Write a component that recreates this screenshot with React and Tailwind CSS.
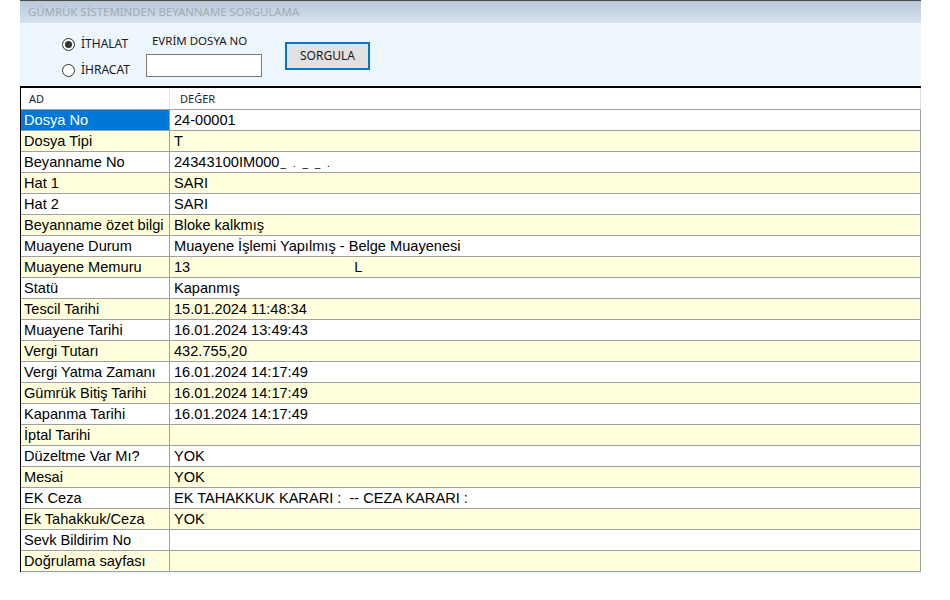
import React from 'react';

const rows = [
  ['Dosya No', '24-00001'],
  ['Dosya Tipi', 'T'],
  ['Beyanname No', 'BEYAN'],
  ['Hat 1', 'SARI'],
  ['Hat 2', 'SARI'],
  ['Beyanname özet bilgi', 'Bloke kalkmış'],
  ['Muayene Durum', 'Muayene İşlemi Yapılmış - Belge Muayenesi'],
  ['Muayene Memuru', 'MEMUR'],
  ['Statü', 'Kapanmış'],
  ['Tescil Tarihi', '15.01.2024 11:48:34'],
  ['Muayene Tarihi', '16.01.2024 13:49:43'],
  ['Vergi Tutarı', '432.755,20'],
  ['Vergi Yatma Zamanı', '16.01.2024 14:17:49'],
  ['Gümrük Bitiş Tarihi', '16.01.2024 14:17:49'],
  ['Kapanma Tarihi', '16.01.2024 14:17:49'],
  ['İptal Tarihi', ''],
  ['Düzeltme Var Mı?', 'YOK'],
  ['Mesai', 'YOK'],
  ['EK Ceza', 'EK TAHAKKUK KARARI :  -- CEZA KARARI :'],
  ['Ek Tahakkuk/Ceza', 'YOK'],
  ['Sevk Bildirim No', ''],
  ['Doğrulama sayfası', ''],
];

function Radio({ checked, label }) {
  return (
    <label className="flex items-center gap-[6px] h-[16px]">
      <span className="w-[13px] h-[13px] rounded-full border border-[#333] bg-white flex items-center justify-center">
        {checked && <span className="w-[7px] h-[7px] rounded-full bg-[#333]" />}
      </span>
      <span>{label}</span>
    </label>
  );
}

function Value({ v }) {
  if (v === 'BEYAN') {
    return (
      <span>
        24343100IM000<span className="text-[10px] tracking-[2px] ml-[1px]">_ . _ _ .</span>
      </span>
    );
  }
  if (v === 'MEMUR') {
    return (
      <span>
        13<span className="ml-[164px]">L</span>
      </span>
    );
  }
  return <span className="whitespace-pre">{v}</span>;
}

export default function App() {
  return (
    <div className="w-[950px] h-[600px] bg-white overflow-hidden">
      <div className="ml-[20px] w-[901px]">
        <div className="h-[23px] border-t border-[#4a4a4a] bg-gradient-to-b from-[#bac9d8] to-[#d5e2ef] pl-[8px] flex items-center text-[11.4px] text-[#a3abb4] font-['Noto_Sans',sans-serif]">
          GÜMRÜK SİSTEMİNDEN BEYANNAME SORGULAMA
        </div>
        <div className="h-[63px] bg-[#eef6fe] flex text-[12px] text-[#1a1a1a] font-['Noto_Sans',sans-serif]">
          <div className="ml-[42px] pt-[13px] flex flex-col gap-[10px]">
            <Radio checked label="İTHALAT" />
            <Radio label="İHRACAT" />
          </div>
          <div className="ml-[16px] pt-[10px] flex flex-col">
            <span className="ml-[6px] leading-[16px] text-[11.5px]">EVRİM DOSYA NO</span>
            <div className="mt-[5px] w-[116px] h-[23px] border border-[#7a7a7a] bg-white" />
          </div>
          <div className="ml-[23px] pt-[19px]">
            <button className="w-[85px] h-[28px] border-2 border-[#0078d7] bg-[#e1e1e1] text-[12px] text-[#1a1a1a]">
              SORGULA
            </button>
          </div>
        </div>
        <div className="w-[901px] border-t-2 border-black">
          <div className="border-l border-black w-[901px] font-['Liberation_Sans',Arial,sans-serif]">
            <div className="flex h-[22px] bg-white border-b border-[#a0a0a0] border-r border-r-[#e0e0e0] text-[11px] text-[#1e1e3c] font-['Noto_Sans',sans-serif]">
              <div className="w-[149px] border-r border-[#e6e6e6] pl-[8px] pt-[1px] flex items-center">AD</div>
              <div className="pl-[10px] pt-[1px] flex items-center">DEĞER</div>
            </div>
            {rows.map(([k, v], i) => {
              const bg = i % 2 === 1 ? 'bg-[#ffffdd]' : 'bg-white';
              return (
                <div key={k} className={`flex h-[21px] border-b border-r border-[#a0a0a0] text-[14.6px] text-black ${bg}`}>
                  <div className={`w-[149px] border-r border-[#a0a0a0] pl-[3px] pt-[2px] flex items-center ${i === 0 ? 'bg-[#0078d7] text-white' : ''}`}>
                    {k}
                  </div>
                  <div className="pl-[4px] pt-[2px] flex items-center">
                    <Value v={v} />
                  </div>
                </div>
              );
            })}
          </div>
          <div className="h-[2px] bg-[#eef6fe]" />
        </div>
      </div>
    </div>
  );
}
